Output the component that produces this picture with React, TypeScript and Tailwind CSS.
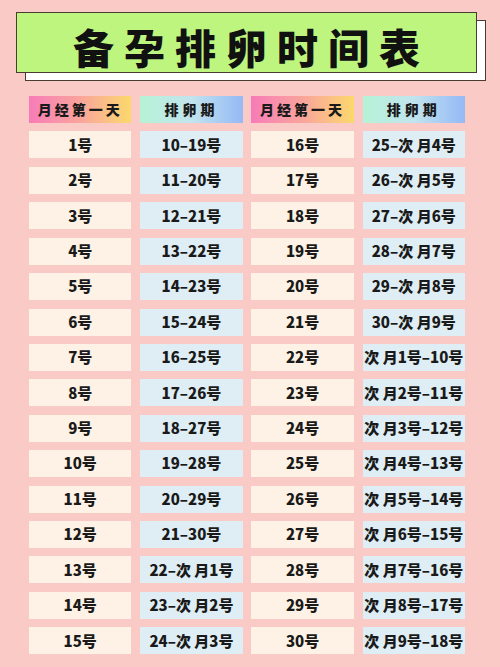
import React from "react";

const left = ["1号","2号","3号","4号","5号","6号","7号","8号","9号","10号","11号","12号","13号","14号","15号"];
const leftP = ["10–19号","11–20号","12–21号","13–22号","14–23号","15–24号","16–25号","17–26号","18–27号","19–28号","20–29号","21–30号","22–次 月1号","23–次 月2号","24–次 月3号"];
const right = ["16号","17号","18号","19号","20号","21号","22号","23号","24号","25号","26号","27号","28号","29号","30号"];
const rightP = ["25–次 月4号","26–次 月5号","27–次 月6号","28–次 月7号","29–次 月8号","30–次 月9号","次 月1号–10号","次 月2号–11号","次 月3号–12号","次 月4号–13号","次 月5号–14号","次 月6号–15号","次 月7号–16号","次 月8号–17号","次 月9号–18号"];

const font = { fontFamily: '"Noto Sans CJK SC", "Noto Sans", sans-serif' };

function Cell({ text, blue }: { text: string; blue?: boolean }) {
  return (
    <div
      className={`h-[27px] flex items-center justify-center text-[15px] font-black text-[#1a1a1a] whitespace-pre ${blue ? "bg-[#dfeef5]" : "bg-[#fdf2e5]"}`}
    >
      {text}
    </div>
  );
}

export default function App() {
  const rows = left.map((_, i) => i);
  return (
    <div className="w-[500px] h-[667px] bg-[#f9cac6] overflow-hidden" style={font}>
      <div className="pt-[12px] pl-[16px]">
        <div className="relative w-[461px] h-[61px]">
          <div className="absolute left-[9px] top-[8px] w-[461px] h-[61px] bg-white border-[1.5px] border-[#4a3b33]" />
          <div className="relative w-[461px] h-[61px] bg-[#bdf57f] border-[1.5px] border-[#4a3b33] flex items-center justify-center">
            <span className="text-[41px] font-black text-[#111] tracking-[10px] pl-[10px] pt-[8px] leading-none">备孕排卵时间表</span>
          </div>
        </div>
      </div>
      <div className="ml-[29px] mt-[23px] w-[436px] grid grid-cols-4 gap-x-[8.7px] gap-y-[8.43px]">
        <div className="h-[27px] flex items-center justify-center text-[14px] font-black tracking-[3px] text-[#1a1a1a] bg-gradient-to-r from-[#f77bb8] via-[#f9a49b] to-[#fcd86a]">月经第一天</div>
        <div className="h-[27px] flex items-center justify-center text-[14px] font-black tracking-[4px] text-[#1a1a1a] bg-gradient-to-r from-[#b6f2d6] via-[#c2e4ee] to-[#95b9f5]">排卵期</div>
        <div className="h-[27px] flex items-center justify-center text-[14px] font-black tracking-[3px] text-[#1a1a1a] bg-gradient-to-r from-[#f77bb8] via-[#f9a49b] to-[#fcd86a]">月经第一天</div>
        <div className="h-[27px] flex items-center justify-center text-[14px] font-black tracking-[4px] text-[#1a1a1a] bg-gradient-to-r from-[#b6f2d6] via-[#c2e4ee] to-[#95b9f5]">排卵期</div>
        {rows.map((i) => (
          <React.Fragment key={i}>
            <Cell text={left[i]} />
            <Cell text={leftP[i]} blue />
            <Cell text={right[i]} />
            <Cell text={rightP[i]} blue />
          </React.Fragment>
        ))}
      </div>
    </div>
  );
}
